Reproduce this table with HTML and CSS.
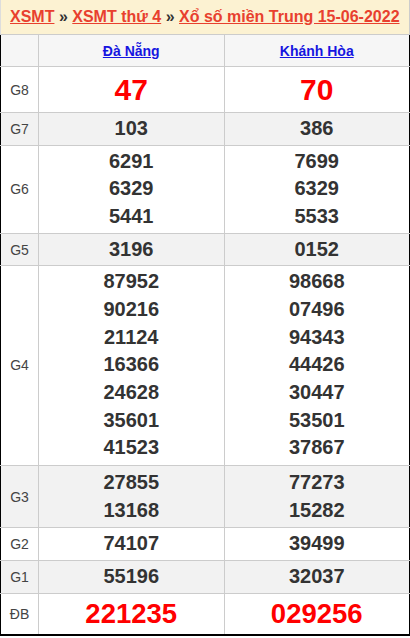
FILE: index.html
```html
<!DOCTYPE html>
<html lang="vi">
<head>
<meta charset="utf-8">
<title>XSMT 15-06-2022</title>
<link rel="stylesheet" href="styles.css">
</head>
<body>
<div class="box">
  <div class="title">
    <a href="#">XSMT</a> <span class="sep">»</span> <a href="#">XSMT thứ 4</a> <span class="sep">»</span> <a href="#">Xổ số miền Trung 15-06-2022</a>
  </div>
  <table class="kq">
    <colgroup><col class="c-lbl"><col class="c-prov"><col class="c-prov"></colgroup>
    <thead>
      <tr class="head"><th></th><th><a href="#">Đà Nẵng</a></th><th><a href="#">Khánh Hòa</a></th></tr>
    </thead>
    <tbody>
      <tr class="g8"><td class="lbl">G8</td><td><div class="big">47</div></td><td><div class="big">70</div></td></tr>
      <tr class="alt"><td class="lbl">G7</td><td><div>103</div></td><td><div>386</div></td></tr>
      <tr><td class="lbl">G6</td><td><div>6291</div><div>6329</div><div>5441</div></td><td><div>7699</div><div>6329</div><div>5533</div></td></tr>
      <tr class="alt"><td class="lbl">G5</td><td><div>3196</div></td><td><div>0152</div></td></tr>
      <tr class="g4"><td class="lbl">G4</td><td><div>87952</div><div>90216</div><div>21124</div><div>16366</div><div>24628</div><div>35601</div><div>41523</div></td><td><div>98668</div><div>07496</div><div>94343</div><div>44426</div><div>30447</div><div>53501</div><div>37867</div></td></tr>
      <tr class="alt g3"><td class="lbl">G3</td><td><div>27855</div><div>13168</div></td><td><div>77273</div><div>15282</div></td></tr>
      <tr><td class="lbl">G2</td><td><div>74107</div></td><td><div>39499</div></td></tr>
      <tr class="alt"><td class="lbl">G1</td><td><div>55196</div></td><td><div>32037</div></td></tr>
      <tr class="db"><td class="lbl">ĐB</td><td><div class="db-num">221235</div></td><td><div class="db-num">029256</div></td></tr>
    </tbody>
  </table>
</div>
</body>
</html>
```
FILE: styles.css
```css
html, body {
  margin: 0;
  padding: 0;
  background: #fff;
}
body {
  font-family: "Liberation Sans", Arial, sans-serif;
  color: #333;
}
.box {
  width: 410px;
}
.title {
  height: 35px;
  box-sizing: border-box;
  background: #fcf2d2;
  border-left: 1px solid #ddd;
  border-right: 1px solid #ccc;
  border-bottom: 1px solid #ccc;
  padding-left: 9px;
  font-size: 16px;
  font-weight: bold;
  line-height: 33px;
  white-space: nowrap;
}
.title a {
  color: #e8402e;
  text-decoration: underline;
}
.title .sep {
  color: #333;
  font-weight: bold;
}
.kq {
  width: 410px;
  border-collapse: collapse;
  table-layout: fixed;
  border-left: 1px solid #000;
  border-right: 1px solid #000;
  border-bottom: 2px solid #000;
}
.c-lbl { width: 38px; }
.kq th, .kq td {
  border: 1px solid #ccc;
  text-align: center;
  vertical-align: middle;
  padding: 2px 0;
}
.kq tr:first-child th { border-top: none; }
.kq td:first-child, .kq th:first-child { border-left: 1px solid #000; }
.kq td:last-child, .kq th:last-child { border-right: 1px solid #000; }
.kq tr:last-child td { border-bottom: 2px solid #000; }
.head th {
  background: #f6f6f6;
  height: 31px;
  font-size: 14px;
  font-weight: bold;
  padding: 0;
}
.head a {
  color: #1515e0;
  text-decoration: underline;
}
.kq td.lbl {
  font-size: 14px;
  color: #444;
  font-weight: normal;
}
.kq td div {
  font-size: 20px;
  font-weight: bold;
  line-height: 27.67px;
  color: #333;
}
.alt td { background: #f2f2f2; }
.g8 td { height: 41px; }
.kq td .big {
  font-size: 30px;
  color: #f00;
  line-height: 36px;
}
.g4 td { padding: 2px 0 3px; }
.g3 td { padding: 3px 0 3px; }
.db td { height: 36px; }
.kq td .db-num {
  font-size: 27.5px;
  color: #f00;
  line-height: 34px;
}
```
